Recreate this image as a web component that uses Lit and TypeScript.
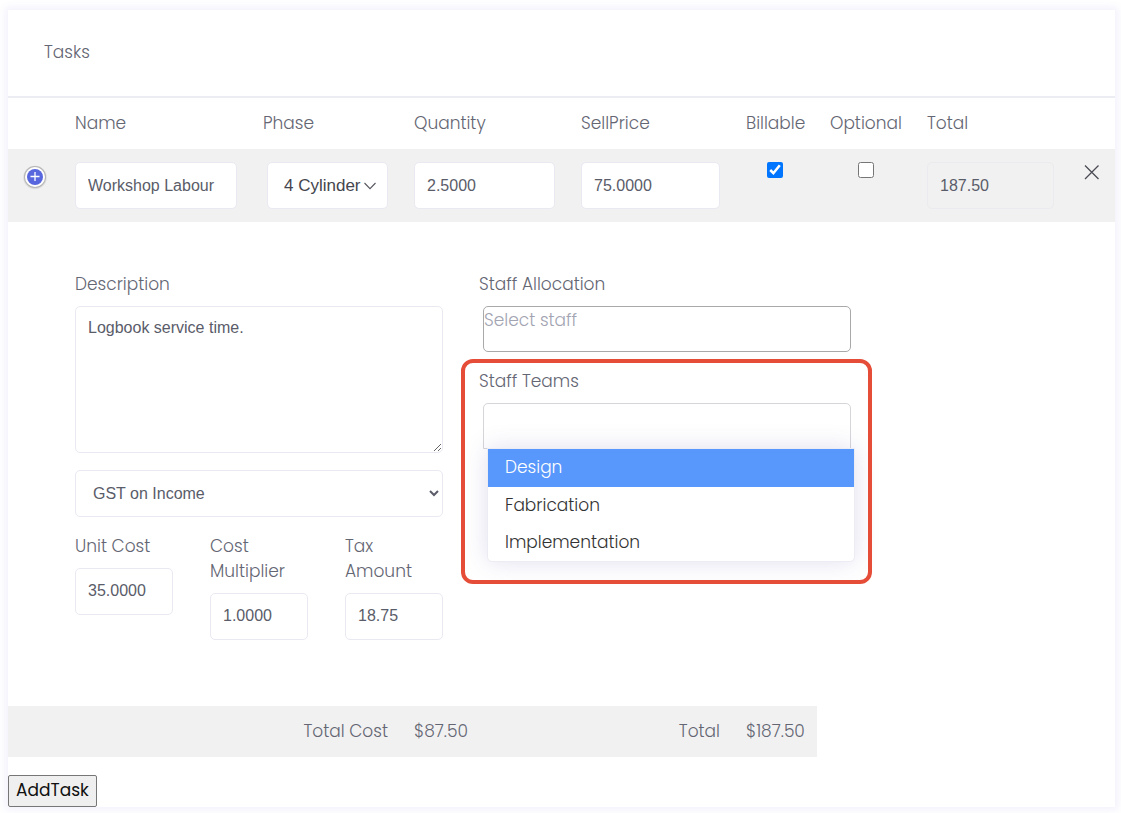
import { LitElement, html, css } from "lit";
import { customElement, state } from "lit/decorators.js";

@customElement("app-root")
class AppRoot extends LitElement {
  @state() private activeTeam = 0;
  private teams = ["Design", "Fabrication", "Implementation"];

  static styles = css`
    :host {
      display: block;
      padding: 10px 6px 6px 8px;
      font-family: Poppins, Inter, sans-serif;
      font-size: 17px;
      font-weight: 300;
      line-height: 25px;
      color: #646673;
    }
    * { box-sizing: border-box; }
    .card { background: #fff; box-shadow: 0 0 8px 3px rgba(82, 63, 205, 0.07); }
    .head {
      display: flex;
      align-items: center;
      height: 88px;
      padding: 0 36px 2px;
      border-bottom: 2px solid #ebedf2;
    }
    h2 { margin: 0; font-size: 17px; font-weight: 300; }
    table { width: 100%; table-layout: fixed; border-collapse: collapse; }
    .c-toggle { width: 54px; }
    .c-name { width: 188px; }
    .c-phase { width: 151px; }
    .c-qty { width: 167px; }
    .c-price { width: 165px; }
    .c-bill { width: 84px; }
    .c-opt { width: 97px; }
    .c-total { width: 153px; }
    .c-del { width: 48px; }
    th, td { padding: 13px; text-align: left; vertical-align: top; font-weight: 300; }
    th { white-space: nowrap; }
    .task td, .sums .fill { background: #f1f1f1; }
    .task .center { text-align: center; }
    .sums .right { text-align: right; }
    .control {
      display: block;
      width: 100%;
      height: 47px;
      margin: 0;
      padding: 0 12px 2px;
      border: 1px solid #e9e9f2;
      border-radius: 5px;
      background: #fff;
      color: #5a5c69;
      font: 400 16px/22px "Liberation Sans", Arial, sans-serif;
      outline: none;
    }
    .control:disabled { background: transparent; border-color: #ebebef; opacity: 1; }
    .task .control { padding-bottom: 0; }
    .area { height: 147px; padding: 10px 12px; resize: vertical; }
    .tax { padding: 0 0 0 13px; }
    .phase { position: relative; padding-left: 17px; }
    .phase .control { appearance: none; padding: 0 24px 0 16px; color: #44454d; font-size: 17px; }
    .chevron { position: absolute; right: 25px; top: 33px; pointer-events: none; }
    .check { width: 16px; height: 16px; margin: 0; display: inline-block; vertical-align: top; accent-color: #0075ff; }
    .icon-btn { display: block; padding: 0; border: 0; background: none; color: #4a4b55; }
    .toggle-cell { padding-left: 15px; padding-right: 0; }
    .del-cell { padding-left: 16px; padding-right: 0; }
    td.details { padding: 50px 13px 66px; }
    .columns { display: grid; grid-template-columns: minmax(0, 368px) minmax(0, 376px); gap: 36px; }
    .stack { display: flex; flex-direction: column; gap: 17px; }
    .field { display: flex; flex-direction: column; gap: 9px; }
    .costs { display: grid; grid-template-columns: repeat(3, 1fr); gap: 37px; align-items: start; }
    .tag {
      height: 46px;
      margin: 0 4px;
      padding: 0 0 19px;
      border: 1px solid #a9a9a9;
      border-radius: 5px;
      background: #fff;
      color: #646673;
      font: inherit;
      outline: none;
    }
    .tag::placeholder { color: #a2a4b2; opacity: 1; }
    .teams { position: relative; }
    .teams .tag { border-color: #d6d6da; border-radius: 5px 5px 0 0; }
    .menu {
      position: absolute;
      top: 79px;
      left: 8px;
      right: 0;
      margin: 0;
      padding: 0;
      list-style: none;
      background: #fff;
      border: 1px solid #ececf4;
      border-radius: 0 0 5px 5px;
      box-shadow: 0 0 25px rgba(82, 63, 155, 0.17);
    }
    .option { padding: 6px 17px; color: #333; }
    .option.active { padding-bottom: 7px; background: #5897fb; color: #fff; }
    .highlight {
      position: absolute;
      inset: -10px -17px -135px -18px;
      border: 4px solid #e54d38;
      border-radius: 12px;
      pointer-events: none;
    }
    .add {
      display: block;
      height: 32px;
      margin-top: 18px;
      padding: 0 7px 1px;
      border: 1px solid #767676;
      border-radius: 2px;
      background: #efefef;
      color: #111;
      font: inherit;
      font-weight: 400;
    }
  `;

  render() {
    return html`
      <section class="card">
        <header class="head"><h2>Tasks</h2></header>
        <table>
          <colgroup>
            <col class="c-toggle" /><col class="c-name" /><col class="c-phase" />
            <col class="c-qty" /><col class="c-price" /><col class="c-bill" />
            <col class="c-opt" /><col class="c-total" /><col class="c-del" />
          </colgroup>
          <thead>
            <tr>
              <th></th><th>Name</th><th>Phase</th><th>Quantity</th><th>SellPrice</th>
              <th>Billable</th><th>Optional</th><th>Total</th><th></th>
            </tr>
          </thead>
          <tbody>
            <tr class="task">
              <td class="toggle-cell">
                <button class="icon-btn" aria-label="Expand task">
                  <svg width="24" height="28" viewBox="0 0 24 28">
                    <circle cx="12" cy="15.5" r="11.8" fill="#dedede" />
                    <circle cx="12" cy="15" r="11" fill="#b5b5b5" />
                    <circle cx="12" cy="15" r="10" fill="#fff" />
                    <circle cx="12" cy="15" r="8" fill="#5867dd" />
                    <path d="M12 10v9M7.5 14.5h9" stroke="#fff" stroke-width="1.3" />
                  </svg>
                </button>
              </td>
              <td><input class="control" aria-label="Name" value="Workshop Labour" /></td>
              <td class="phase">
                <select class="control" aria-label="Phase"><option>4 Cylinder</option></select>
                <svg class="chevron" width="12" height="8" viewBox="0 0 12 8" fill="none" stroke="#55565e" stroke-width="1.1">
                  <path d="M.5 1 6 6.6 11.5 1" />
                </svg>
              </td>
              <td><input class="control" aria-label="Quantity" value="2.5000" /></td>
              <td><input class="control" aria-label="SellPrice" value="75.0000" /></td>
              <td class="center"><input class="check" type="checkbox" aria-label="Billable" checked /></td>
              <td class="center"><input class="check" type="checkbox" aria-label="Optional" /></td>
              <td><input class="control" aria-label="Total" value="187.50" disabled /></td>
              <td class="del-cell">
                <button class="icon-btn" aria-label="Remove task">
                  <svg width="18" height="20" viewBox="0 0 18 20" fill="none" stroke="currentColor" stroke-width="1.3">
                    <path d="M2 3.5 15.5 17M15.5 3.5 2 17" />
                  </svg>
                </button>
              </td>
            </tr>
            <tr>
              <td></td>
              <td class="details" colspan="8">
                <div class="columns">
                  <div class="stack">
                    <div class="field">
                      <label for="desc">Description</label>
                      <textarea id="desc" class="control area" .value=${"Logbook service time."}></textarea>
                    </div>
                    <select class="control tax" aria-label="Tax rate"><option>GST on Income</option></select>
                    <div class="costs">
                      <div class="field"><label for="unit">Unit Cost</label><input id="unit" class="control" value="35.0000" /></div>
                      <div class="field"><label for="mult">Cost Multiplier</label><input id="mult" class="control" value="1.0000" /></div>
                      <div class="field"><label for="tax">Tax Amount</label><input id="tax" class="control" value="18.75" /></div>
                    </div>
                  </div>
                  <div class="stack">
                    <div class="field">
                      <label for="staff">Staff Allocation</label>
                      <input id="staff" class="tag" placeholder="Select staff" />
                    </div>
                    <div class="field teams">
                      <label for="teams">Staff Teams</label>
                      <input id="teams" class="tag" role="combobox" aria-expanded="true" aria-controls="team-list" />
                      <ul id="team-list" class="menu" role="listbox">
                        ${this.teams.map(
                          (team, i) => html`<li
                            class="option ${i === this.activeTeam ? "active" : ""}"
                            role="option"
                            aria-selected=${i === this.activeTeam}
                            @mouseenter=${() => (this.activeTeam = i)}
                          >${team}</li>`
                        )}
                      </ul>
                      <div class="highlight"></div>
                    </div>
                  </div>
                </div>
              </td>
            </tr>
            <tr class="sums">
              <td class="fill right" colspan="3">Total Cost</td>
              <td class="fill">$87.50</td>
              <td class="fill right">Total</td>
              <td class="fill">$187.50</td>
              <td colspan="3"></td>
            </tr>
          </tbody>
        </table>
        <button class="add">AddTask</button>
      </section>
    `;
  }
}
